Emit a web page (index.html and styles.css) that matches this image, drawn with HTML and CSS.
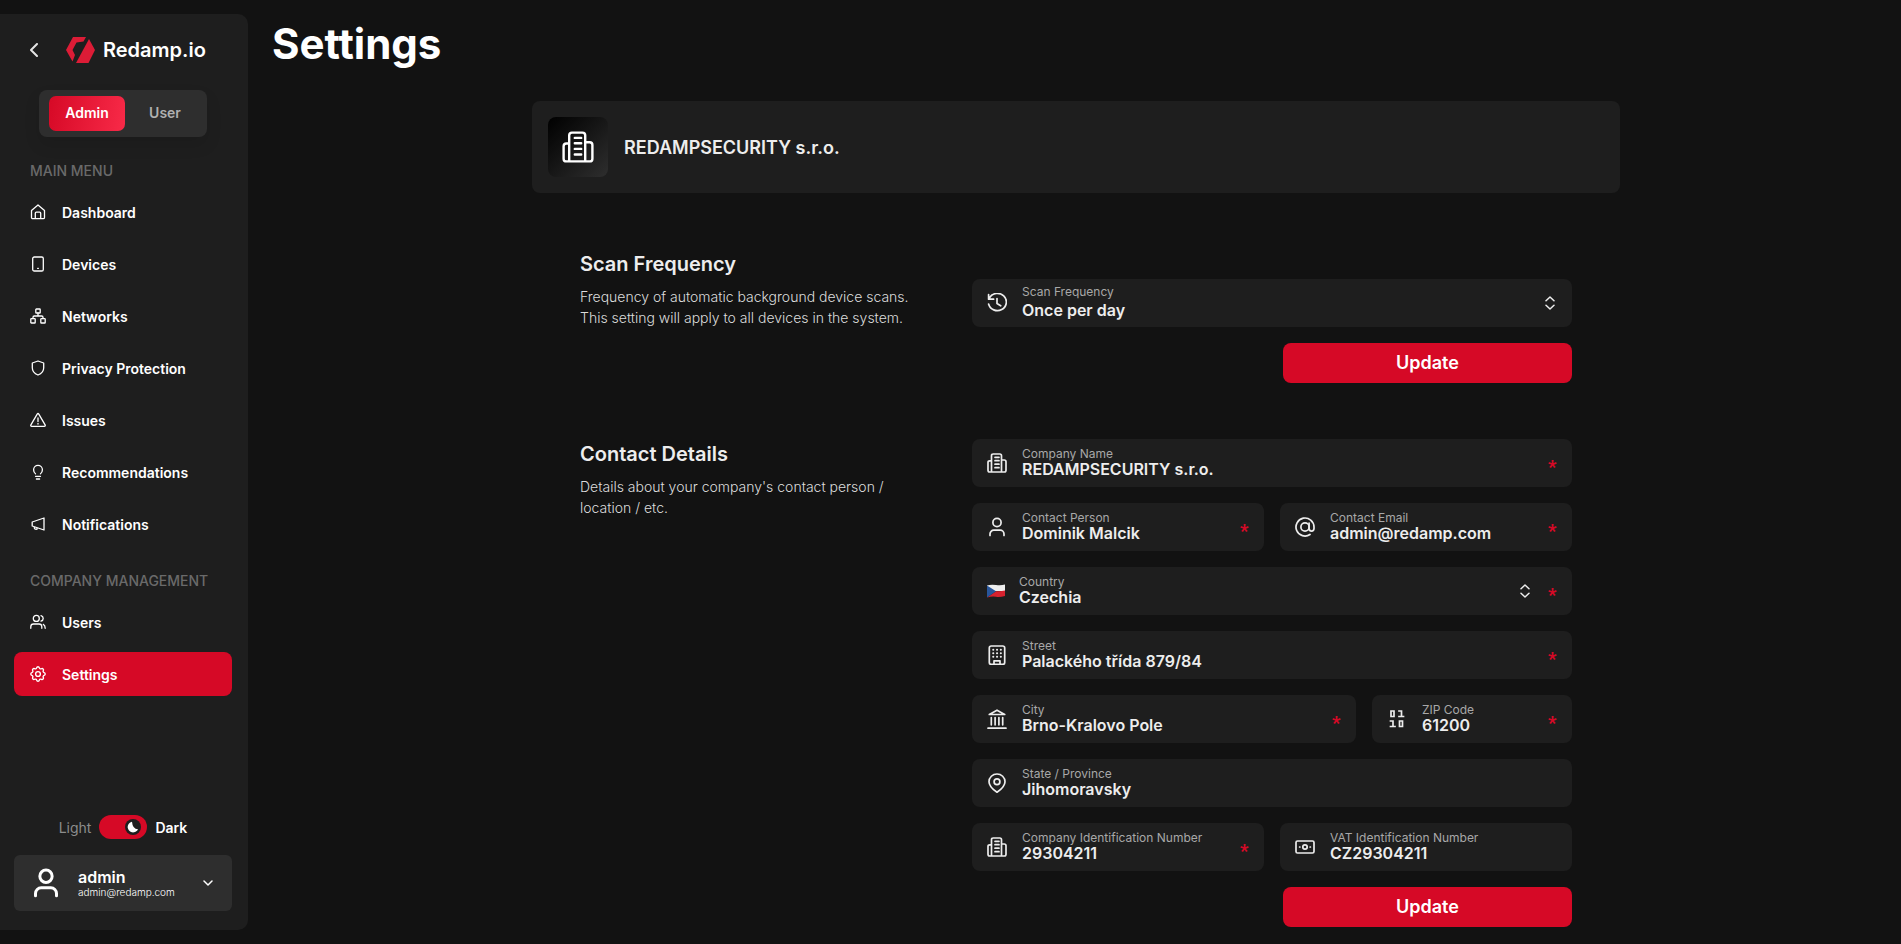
FILE: index.html
```html
<!DOCTYPE html>
<html lang="en">
<head>
<meta charset="utf-8">
<meta name="viewport" content="width=device-width, initial-scale=1">
<title>Settings - Redamp.io</title>
<link rel="stylesheet" href="styles.css">
</head>
<body>
<svg class="sprite" aria-hidden="true">
  <symbol id="office" viewBox="0 0 20 20"><path d="M4.500 19V2.700q0-1.700 1.700-1.700h6.600q1.700 0 1.700 1.700V19M4.500 7.800H2.700Q1 7.800 1 9.500v7.800Q1 19 2.700 19h14.600q1.700 0 1.700-1.700V8.700Q19 7 17.300 7h-2.800M8 4.300h4M8 7.700h4M8 11.200h4M8 14.700h4"/></symbol>
  <symbol id="person" viewBox="0 0 20 20"><circle cx="10" cy="5.500" r="4.100"/><path d="M3 18.500v-1.500a3.800 3.800 0 0 1 3.800-3.800h6.400a3.800 3.800 0 0 1 3.800 3.800v1.500"/></symbol>
  <symbol id="updown" viewBox="0 0 10 14"><path d="M1 4.800 5 1l4 3.800M1 9.200 5 13l4-3.800"/></symbol>
</svg>
<div class="app">
  <aside class="sidebar">
    <div class="brand">
      <button class="back" type="button" aria-label="Collapse menu"><svg class="chev" viewBox="0 0 8 14"><path d="M7 1 1 7l6 6"/></svg></button>
      <a class="logo" href="#">
        <svg class="mark" viewBox="0 0 29 26"><path d="M7 0h13l-2.500 4.500-7 1L6.500 13l2.500 5-2.500 6.500L0 13Z"/><path d="M23 2l6 11-6.500 13H10Z"/></svg>
        <span>Redamp.io</span>
      </a>
    </div>
    <div class="roles">
      <button class="role active" type="button">Admin</button>
      <button class="role" type="button">User</button>
    </div>
    <nav class="nav">
      <h2>MAIN MENU</h2>
      <a href="#"><svg viewBox="0 0 16 16"><path d="M1.500 6.400 8 1l6.500 5.400v7q0 1.300-1.300 1.300H2.800q-1.300 0-1.300-1.300ZM5.300 14.600V9.200q0-1 1-1h3.400q1 0 1 1v5.400"/></svg>Dashboard</a>
      <a href="#"><svg viewBox="0 0 16 16"><rect x="2.700" y="1" width="10.600" height="14" rx="1.600"/><path d="M7.600 12.300h.8"/></svg>Devices</a>
      <a href="#"><svg viewBox="0 0 16 16"><rect x="5.800" y="1" width="4.400" height="4" rx=".6"/><rect x=".8" y="10.600" width="4.400" height="4.400" rx=".6"/><rect x="10.800" y="10.600" width="4.400" height="4.400" rx=".6"/><path d="M8 5v3M3 10.500V9.300Q3 8 4.300 8h7.400Q13 8 13 9.300v1.200"/></svg>Networks</a>
      <a href="#"><svg viewBox="0 0 16 16"><path d="M8 1 2.300 3v4.700c0 3.200 2.200 5.900 5.700 7.300 3.500-1.400 5.700-4.100 5.700-7.300V3Z"/></svg>Privacy Protection</a>
      <a href="#"><svg viewBox="0 0 16 16"><path d="M7.200 2.100q.8-1.200 1.600 0l6.300 10.700q.6 1.400-.9 1.500H1.800q-1.500-.1-.9-1.500ZM8 6v3.400M8 11.500v.5"/></svg>Issues</a>
      <a href="#"><svg viewBox="0 0 16 16"><path d="M5.500 9.800C4.200 8.900 3.600 7.400 3.600 5.800a4.400 4.400 0 0 1 8.800 0c0 1.600-.6 3.100-1.900 4M5.500 12.300h5M6.400 15h3.200"/></svg>Recommendations</a>
      <a href="#"><svg viewBox="0 0 16 16"><path d="M14 2v12L2.200 10V6ZM4.300 11v1q.5 1.700 2.700 1.200V12"/></svg>Notifications</a>
      <h2>COMPANY MANAGEMENT</h2>
      <a href="#"><svg viewBox="0 0 16 16"><circle cx="6.300" cy="4.400" r="3"/><path d="M.8 14.300v-1.600q0-2.700 2.700-2.700h5.600q2.700 0 2.700 2.700v1.600M11 1.600q2.200.8 2.200 2.800T11 7.200M13.300 10.400q1.900.9 1.900 3.900"/></svg>Users</a>
      <a class="active" href="#" aria-current="page"><svg viewBox="2 2 20 20" class="gear"><circle cx="12" cy="12" r="3"/><path d="M10.325 4.317c.426-1.756 2.924-1.756 3.350 0a1.724 1.724 0 0 0 2.573 1.066c1.543-.94 3.310.826 2.370 2.370a1.724 1.724 0 0 0 1.065 2.572c1.756.426 1.756 2.924 0 3.350a1.724 1.724 0 0 0-1.066 2.573c.94 1.543-.826 3.310-2.370 2.370a1.724 1.724 0 0 0-2.572 1.065c-.426 1.756-2.924 1.756-3.350 0a1.724 1.724 0 0 0-2.573-1.066c-1.543.94-3.310-.826-2.370-2.370a1.724 1.724 0 0 0-1.065-2.572c-1.756-.426-1.756-2.924 0-3.350a1.724 1.724 0 0 0 1.066-2.573c-.94-1.543.826-3.310 2.370-2.370 1 .608 2.296.07 2.572-1.065Z"/></svg>Settings</a>
    </nav>
    <label class="theme">
      <span class="light">Light</span>
      <span class="switch"><input type="checkbox" role="switch" checked aria-label="Dark theme"><svg class="moon" viewBox="0 0 16 16"><circle class="disc" cx="8" cy="8" r="8"/><path d="M7 2.700a5.400 5.400 0 1 0 6 7.500Q7.500 10 7 2.700Z"/></svg></span>
      <span class="dark">Dark</span>
    </label>
    <button class="account" type="button">
      <svg class="avatar"><use href="#person"/></svg>
      <span class="who"><b>admin</b><small>admin@redamp.com</small></span>
      <svg class="down" viewBox="0 0 10 6"><path d="m1 1 4 4 4-4"/></svg>
    </button>
  </aside>

  <main class="main">
    <h1>Settings</h1>
    <div class="content">
      <header class="company">
        <span class="tile"><svg><use href="#office"/></svg></span>
        <h2>REDAMPSECURITY s.r.o.</h2>
      </header>

      <section class="section">
        <div class="about">
          <h3>Scan Frequency</h3>
          <p>Frequency of automatic background device scans. This setting will apply to all devices in the system.</p>
        </div>
        <form class="form form-scan">
          <div class="field roomy">
            <svg class="icon" viewBox="0 0 20 20"><path d="M2.500 4.800A9 8.600 0 1 1 1.600 11M1.600 1.500v4.700h5M10 5.600v5l3.700 2.200"/></svg>
            <div class="body"><label for="scan">Scan Frequency</label><select id="scan"><option>Once per day</option></select></div>
            <svg class="updown"><use href="#updown"/></svg>
          </div>
          <button class="update" type="submit">Update</button>
        </form>
      </section>

      <section class="section">
        <div class="about">
          <h3>Contact Details</h3>
          <p>Details about your company's contact person / location / etc.</p>
        </div>
        <form class="form">
          <div class="field">
            <svg class="icon"><use href="#office"/></svg>
            <div class="body"><label for="name">Company Name</label><input id="name" value="REDAMPSECURITY s.r.o."></div>
            <span class="req">*</span>
          </div>
          <div class="row">
            <div class="field">
              <svg class="icon"><use href="#person"/></svg>
              <div class="body"><label for="person-name">Contact Person</label><input id="person-name" value="Dominik Malcik"></div>
              <span class="req">*</span>
            </div>
            <div class="field">
              <svg class="icon" viewBox="0 0 20 20"><circle cx="10" cy="10" r="4.100"/><path d="M14.100 6v5.600q.2 2.500 2.500 2.500T19 11.500V10a9 9 0 1 0-4 7.500"/></svg>
              <div class="body"><label for="email">Contact Email</label><input id="email" type="email" value="admin@redamp.com"></div>
              <span class="req">*</span>
            </div>
          </div>
          <div class="field country">
            <svg class="flag" viewBox="0 0 18 14"><path fill="#eee" d="M0 1.500Q4 .2 9 1T18 .5V7H0Z"/><path fill="#d7222f" d="M9 7.200Q14 7.500 18 6.500V12Q13 13.500 9 12.800T0 13.500Z"/><path fill="#28569b" d="M0 1.500 9 7.200 0 13.500Z"/></svg>
            <div class="body"><label for="country">Country</label><select id="country"><option>Czechia</option></select></div>
            <svg class="updown"><use href="#updown"/></svg>
            <span class="req">*</span>
          </div>
          <div class="field">
            <svg class="icon" viewBox="0 0 20 20"><rect x="2.300" y="1" width="15.400" height="18.400" rx="2"/><path d="M7 19v-3.200h6V19"/><path class="dots" d="M6.200 4.800h.1M10 4.800h.1M13.800 4.800h.1M6.200 8.300h.1M10 8.300h.1M13.800 8.300h.1M6.200 11.800h.1M10 11.800h.1M13.800 11.800h.1"/></svg>
            <div class="body"><label for="street">Street</label><input id="street" value="Palackého třída 879/84"></div>
            <span class="req">*</span>
          </div>
          <div class="row row-city">
            <div class="field">
              <svg class="icon" viewBox="0 0 20 20"><path d="M2.300 5.500 10 1.200l7.700 4.300ZM4.300 8.500v7.300M8.100 8.500v7.300M11.900 8.500v7.300M15.700 8.500v7.300M1 19.200h18"/></svg>
              <div class="body"><label for="city">City</label><input id="city" value="Brno-Kralovo Pole"></div>
              <span class="req">*</span>
            </div>
            <div class="field">
              <svg class="icon square" viewBox="0 0 20 20"><path d="M4 2h3v5.500H4ZM12 2h2.500v5.500M12 7.500h4.500M3.500 12H6v5.500M3.500 17.500H8M12.500 12h3v5.500h-3Z"/></svg>
              <div class="body"><label for="zip">ZIP Code</label><input id="zip" value="61200"></div>
              <span class="req">*</span>
            </div>
          </div>
          <div class="field">
            <svg class="icon" viewBox="0 0 20 20"><path d="M10 19.300Q2 13.700 2 8.700a8 7.700 0 0 1 16 0q0 5-8 10.600Z"/><circle cx="10" cy="8.700" r="2.900"/></svg>
            <div class="body"><label for="state">State / Province</label><input id="state" value="Jihomoravsky"></div>
          </div>
          <div class="row">
            <div class="field">
              <svg class="icon"><use href="#office"/></svg>
              <div class="body"><label for="cin">Company Identification Number</label><input id="cin" value="29304211"></div>
              <span class="req">*</span>
            </div>
            <div class="field">
              <svg class="icon" viewBox="0 0 20 20"><rect x="1" y="4" width="18" height="12" rx="1.500"/><circle cx="10" cy="10" r="2.200"/><path d="M4.600 10h.3M15.100 10h.3"/></svg>
              <div class="body"><label for="vat">VAT Identification Number</label><input id="vat" value="CZ29304211"></div>
            </div>
          </div>
          <button class="update" type="submit">Update</button>
        </form>
      </section>
    </div>
  </main>
</div>
</body>
</html>
```
FILE: styles.css
```css
* { box-sizing: border-box; }
body {
  margin: 0;
  background: #121212;
  color: #fff;
  font-family: Inter, Roboto, sans-serif;
  font-size: 14px;
}
h1, h2, h3, p { margin: 0; }
a { color: inherit; text-decoration: none; }
button, input, select { font: inherit; color: inherit; border: 0; padding: 0; margin: 0; background: none; }
button { cursor: pointer; }
svg { flex: none; fill: none; stroke: currentColor; stroke-linecap: round; stroke-linejoin: round; }
.sprite { position: absolute; width: 0; height: 0; }

.app { display: flex; min-height: 100vh; }

.sidebar {
  display: flex;
  flex-direction: column;
  flex: none;
  width: 248px;
  margin: 14px 0;
  padding: 22px 16px 19px 14px;
  background: #1e1e1e;
  border-radius: 0 10px 10px 0;
}
.brand { display: flex; align-items: center; gap: 28px; height: 28px; padding-left: 16px; }
.back { display: flex; }
.chev { width: 8px; height: 14px; stroke-width: 2; color: #e4e4e4; }
.logo { display: flex; align-items: center; gap: 8px; font-size: 20px; font-weight: 600; }
.mark { width: 29px; height: 26px; fill: #dc1c36; stroke: none; }
.roles {
  display: flex;
  align-self: center;
  gap: 2px;
  width: 168px;
  margin-top: 26px;
  padding: 6px 4px 6px 10px;
  background: #2e2e2e;
  border-radius: 8px;
  box-shadow: 0 8px 16px rgba(0, 0, 0, .1);
}
.role { flex: 1; height: 35px; padding-bottom: 2px; border-radius: 7px; font-weight: 600; color: #b0b0b0; }
.role.active { color: #fff; background: linear-gradient(100deg, #d60926, #f82a48); }

.nav { display: flex; flex-direction: column; gap: 8px; margin-top: 24px; }
.nav h2 { padding-left: 16px; font-size: 14px; line-height: 20px; font-weight: 500; color: #6a6a6a; white-space: nowrap; }
.nav h2 + a { margin-top: 1px; }
.nav a + h2 { margin-top: 17px; }
.nav a {
  display: flex;
  align-items: center;
  gap: 16px;
  height: 44px;
  padding-left: 16px;
  border-radius: 8px;
  font-weight: 600;
}
.nav svg { width: 16px; height: 16px; stroke-width: 1.3; }
.nav .gear { stroke-width: 1.7; }
.nav a.active { background: #d60926; }

.theme { display: flex; align-items: center; align-self: center; gap: 8px; margin-top: auto; }
.light { color: #8c8c8c; }
.dark { font-weight: 600; }
.switch { display: grid; width: 48px; height: 24px; }
.switch > * { grid-area: 1 / 1; }
.switch input { appearance: none; width: 48px; height: 24px; border-radius: 12px; background: #d60926; }
.moon { align-self: center; justify-self: end; width: 16px; height: 16px; margin-right: 6px; fill: #fff; stroke: none; }
.moon .disc { fill: #1e1e1e; }
.account {
  display: flex;
  align-items: center;
  height: 56px;
  margin-top: 16px;
  padding: 0 19px 0 17px;
  background: #2e2e2e;
  border-radius: 6px;
  text-align: left;
}
.avatar { width: 30px; height: 30px; stroke-width: 2; }
.who { display: flex; flex: 1; flex-direction: column; padding-left: 17px; }
.who b { font-size: 16px; line-height: 18px; font-weight: 600; }
.who small { font-size: 10px; line-height: 12px; font-weight: 300; }
.down { width: 10px; height: 6px; stroke-width: 1.5; }

.main { flex: 1; min-width: 0; padding: 20px 21px 17px 24px; }
h1 { font-size: 42px; line-height: 48px; font-weight: 700; }
.content { max-width: 1088px; margin: 33px auto 0; }
.company {
  display: flex;
  align-items: center;
  gap: 16px;
  padding: 16px;
  background: #1e1e1e;
  border-radius: 8px;
}
.tile {
  display: grid;
  place-items: center;
  flex: none;
  width: 60px;
  height: 60px;
  background: linear-gradient(135deg, #000, #2e2e2e);
  border-radius: 8px;
}
.tile svg { width: 32px; height: 32px; stroke-width: 1.500; }
.company h2 { font-size: 18px; font-weight: 600; color: #ededed; }

.section {
  display: grid;
  grid-template-columns: minmax(0, 1fr) minmax(0, 600px);
  margin-top: 56px;
  padding: 0 48px;
}
.about { padding-top: 3px; }
.about h3 { font-size: 20px; line-height: 24px; font-weight: 600; color: #ededed; }
.about p { max-width: 330px; margin-top: 10px; line-height: 21px; font-weight: 300; color: #dcdcdc; }
.form { display: flex; flex-direction: column; gap: 16px; }
.form-scan { padding-top: 30px; }
.row { display: grid; grid-template-columns: 1fr 1fr; gap: 16px; }
.row-city { grid-template-columns: minmax(0, 1fr) 200px; }
.field {
  display: flex;
  align-items: center;
  gap: 15px;
  min-width: 0;
  height: 48px;
  padding: 0 16px 0 15px;
  background: #1e1e1e;
  border-radius: 8px;
  color: #ededed;
}
.icon { width: 20px; height: 20px; stroke-width: 1.700; }
.icon .dots { stroke-width: 2; }
.square { stroke-linecap: square; stroke-linejoin: miter; }
.flag { width: 18px; height: 14px; stroke: none; }
.country { gap: 14px; }
.country .updown { margin-right: 4px; }
.body { display: flex; flex: 1; flex-direction: column; min-width: 0; }
.body label { font-size: 12px; line-height: 14px; color: #a8a8a8; white-space: nowrap; }
.body input, .body select {
  width: 100%;
  height: 20px;
  margin-top: -2px;
  line-height: 20px;
  font-size: 16px;
  font-weight: 600;
  outline: 0;
  appearance: none;
}
.roomy .body { padding-bottom: 2px; }
.roomy label { line-height: 16px; }
.roomy select { margin-top: 0; }
.updown { width: 10px; height: 14px; stroke-width: 1.500; }
.field > .updown:last-child { margin-right: 1px; }
.req { width: 8px; padding-top: 8px; font-family: Roboto, sans-serif; font-size: 18px; line-height: 18px; font-weight: 900; color: #d60926; }
.update {
  align-self: flex-end;
  width: 289px;
  height: 40px;
  padding-bottom: 2px;
  border-radius: 8px;
  background: #d60926;
  color: #fff;
  font-size: 18px;
  font-weight: 600;
}

@media (max-width: 1100px) {
  .section { grid-template-columns: minmax(0, 1fr); gap: 24px; padding: 0 16px; }
}
```
